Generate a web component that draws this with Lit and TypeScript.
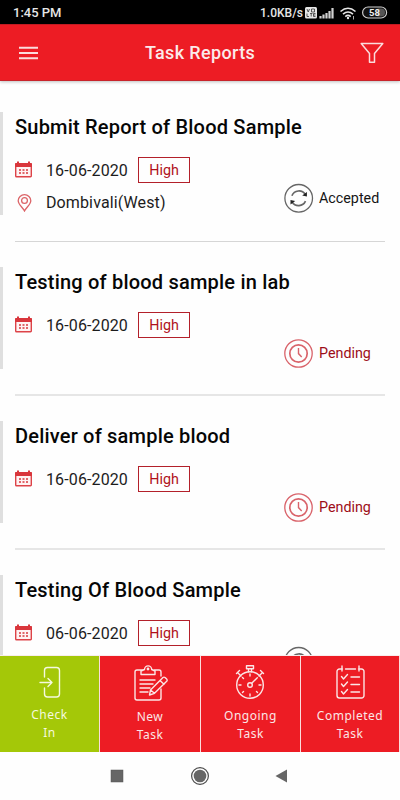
import { LitElement, html, css, svg, nothing } from "lit";
import { customElement, property } from "lit/decorators.js";

type Status = "Accepted" | "Pending";
interface Task { title: string; date: string; place?: string; status: Status; }

const TASKS: Task[] = [
  { title: "Submit Report of Blood Sample", date: "16-06-2020", place: "Dombivali(West)", status: "Accepted" },
  { title: "Testing of blood sample in lab", date: "16-06-2020", status: "Pending" },
  { title: "Deliver of sample blood", date: "16-06-2020", status: "Pending" },
  { title: "Testing Of Blood Sample", date: "06-06-2020", status: "Accepted" },
];

const calendar = html`<svg class="cal" width="17" height="17" viewBox="0 0 17 17">
  <path d="M.7 3.2V15a.8.8 0 0 0 .8.8h14a.8.8 0 0 0 .8-.8V3.2" fill="#fff3f3" stroke="#dd4348" stroke-width="1.4"/>
  <path d="M0 6V2.600Q0 2 .8 2H2V.6h2V2h9V.6h2V2h1.200q.8 0 .8.600V6z" fill="#d9363c"/>
  <path d="M4 9h2M7.500 9h2M11 9h2M4 12h2M7.500 12h2M11 12h2" stroke="#e0666a" stroke-width="1.800"/>
</svg>`;

const pin = html`<svg width="15" height="18" viewBox="0 0 15 18" fill="none" stroke="#dc6468" stroke-width="1.300">
  <path d="M7.500 17C5.500 13 1.200 10.400 1.200 6.700a6.300 6 0 0 1 12.600 0C13.800 10.400 9.500 13 7.500 17z"/>
  <circle cx="7.500" cy="6.500" r="2.900"/>
</svg>`;

const accepted = html`<svg width="30" height="30" viewBox="0 0 30 30" fill="none" stroke="#666">
  <circle cx="14.700" cy="15.300" r="13.800" stroke-width="1.300"/>
  <path d="M7.900 12.700A7.600 7.600 0 0 1 21.300 11.400M21.500 18.200A7.600 7.600 0 0 1 8.100 19" stroke-width="1.700"/>
  <path d="M22.900 9v4.600l-4.700-1zM6.500 21.500v-4.600l4.700 1z" fill="#222" stroke="none"/>
</svg>`;

const pending = html`<svg width="30" height="30" viewBox="0 0 30 30" fill="none" stroke="#d9636a">
  <circle cx="14.500" cy="15.500" r="13.700" stroke-width="1.300"/>
  <circle cx="14.500" cy="15.500" r="8.700" stroke-width="1.700"/>
  <path d="M14.500 10v5.600l3.200 3.400" stroke-width="1.400"/>
</svg>`;

@customElement("task-card")
export class TaskCard extends LitElement {
  @property({ attribute: false }) task!: Task;

  static styles = css`
    :host { display: block; padding-bottom: 25px; }
    .body { display: flex; position: relative; height: 127px; }
    .body.tall { height: 129px; }
    .bar { width: 3px; height: 102px; background: #dfdfdf; flex: none; }
    .tall .bar { height: 103px; }
    .main { margin-left: 12px; flex: 1; }
    h2 { margin: 2px 0 0; font: 500 20px/26px Roboto, sans-serif; letter-spacing: .2px; color: #060606; white-space: nowrap; }
    .row { display: flex; align-items: center; height: 26px; margin-top: 17px; }
    .row svg { flex: none; }
    .cal { margin: 0 0 2px 0; }
    .date { width: 92px; margin-left: 14px; font-size: 16px; letter-spacing: .12px; color: #1c1c1c; }
    .tag { box-sizing: border-box; width: 52px; height: 26px; border: 1px solid #b3202a; color: #b0101a;
      display: flex; align-items: center; justify-content: center; font-size: 14.300px; }
    .place { margin-top: 6px; font-size: 16px; letter-spacing: .12px; color: #1c1c1c; }
    .place svg { margin: 2px 0 0 2px; }
    .place span { margin-left: 14px; }
    .status { position: absolute; left: 284px; top: 71px; height: 30px; display: flex; align-items: center;
      gap: 5px; font-size: 14.300px; color: #9d0d18; }
    .ok { color: #151515; }
    .ok span { padding-top: 1px; }
    .tall .ok span { padding-top: 0; }
    hr { border: 0; margin: 0 15px; height: 2px; background: #e6e6e6; }
    .tall + hr { height: 1px; background: #d6d6d6; }
  `;

  render() {
    const t = this.task;
    const ok = t.status === "Accepted";
    return html`
      <div class="body ${t.place ? "tall" : ""}">
        <div class="bar"></div>
        <div class="main">
          <h2>${t.title}</h2>
          <div class="row">${calendar}<span class="date">${t.date}</span><span class="tag">High</span></div>
          ${t.place ? html`<div class="row place">${pin}<span>${t.place}</span></div>` : nothing}
        </div>
        <div class="status ${ok ? "ok" : ""}">${ok ? accepted : pending}<span>${t.status}</span></div>
      </div>
      <hr />`;
  }
}

const checkIn = svg`<path d="M12.500 12V5.500a3 3 0 0 1 3-3h9a3 3 0 0 1 3 3v23.500a3 3 0 0 1-3 3h-9a3 3 0 0 1-3-3V23M8 17.500h12M16 13.500l4 4-4 4"/>`;
const newTask = svg`<path d="M10 5H4a2 2 0 0 0-2 2v26a2 2 0 0 0 2 2h22a2 2 0 0 0 2-2V24M28 11V7a2 2 0 0 0-2-2h-5M8 9.500V6l3.500-1.500a3.500 3.500 0 0 1 7.200 0L22 6v3.500zM7 15h15M7 19h13M7 23h10M7 27h8"/>
  <path d="M17.500 25 30 12.500q1-.8 2 0l1.700 1.600q.9 1.100 0 2.200L21.500 28.300l-5 1.700zM17.500 25l4 3.300M27 15.500l4 3.800"/><circle cx="15" cy="4" r=".7"/>`;
const stopwatch = svg`<circle cx="16.500" cy="20" r="13.300"/><path d="M13 .8h7v3h-7zM15 4v2.700M18 4v2.700M4.500 8l3 3M28.500 8l-3 3M3 8.500l3-3M30 8.500l-3-3M18.200 18.300l5.600-5.600M16.500 9v2M16.500 29v2M5.500 20h2M25.500 20h2M9 27.500l1-1M24 27.500l-1-1M9 12.500l1 1"/><circle cx="16.500" cy="20" r="2.300"/>`;
const checklist = svg`<path d="M7 4H4a2.500 2.500 0 0 0-2.500 2.500v24A2.500 2.500 0 0 0 4 33h22a2.500 2.500 0 0 0 2.500-2.500v-24A2.500 2.500 0 0 0 26 4h-3M10 4h10M6.500 1v5M23.500 1v5M6 11.500l2 2.500 4-4.500M6 19l2 2.500 4-4.500M6 26.500 8 29l4-4.500M15.500 12H24M15.500 19.500H24M15.500 27H24"/>`;

@customElement("app-root")
export class AppRoot extends LitElement {
  static styles = css`
    :host { display: flex; flex-direction: column; width: 400px; height: 800px; overflow: hidden;
      background: #fefefe; font-family: Roboto, sans-serif; }
    .system { height: 24px; flex: none; background: #000; color: #e6e6e6; display: flex; align-items: center;
      padding: 0 12px 0 13px; font-weight: 500; font-size: 12px; line-height: 24px; }
    .clock { padding-top: 2px; font-size: 13px; }
    .right { margin-left: auto; display: flex; align-items: center; padding-top: 1px; }
    .right svg { flex: none; }
    header { height: 57px; flex: none; box-sizing: border-box; background: #ed1c24; display: flex; align-items: center;
      justify-content: space-between; padding: 0 16px 0 19px; border-top: 1px solid #c11b22; border-bottom: 1px solid #c9242b;
      box-shadow: 0 1px 3px rgba(0,0,0,.25); z-index: 1; }
    h1 { margin: 0 0 0 2px; font: 500 18px/24px Roboto, sans-serif; letter-spacing: .35px; color: #fbeaea; }
    main { flex: 1; min-height: 0; overflow: hidden; padding-top: 31px; }
    .tiles { height: 97px; box-sizing: border-box; flex: none; display: grid; grid-template-columns: 99px 100px 99px 1fr;
      background: #fbdcdc; column-gap: 1px; padding-right: 1px; border-top: 1px solid #f8eded; }
    .tile { background: #ed1c24; display: flex; flex-direction: column; align-items: center; color: #fbe6e6;
      font: 12px/18px "Noto Sans", sans-serif; letter-spacing: .5px; text-align: center; }
    .tile.green { background: #a4c808; color: #f5f9df; }
    .tile svg { height: 38px; width: 35px; margin: 9px 0 4px; fill: none; stroke: currentColor; stroke-width: 1.400;
      stroke-linecap: round; stroke-linejoin: round; flex: none; }
    .tile.green svg { height: 36px; margin-bottom: 5px; }
    .tile.lower svg { margin-bottom: 5px; }
    .tile span { width: 80px; }
    nav { height: 48px; flex: none; }
    nav svg { display: block; }
  `;

  render() {
    return html`
      <div class="system">
        <span class="clock">1:45 PM</span>
        <div class="right">
          <span>1.0KB/s</span>
          <svg width="85" height="16" viewBox="0 0 85 16">
            <rect x="2" y="2" width="12" height="11.500" rx="1.500" fill="#e6e6e6"/>
            <path d="M4 4l1.200 3L6.500 4M8.500 4h3v3h-3zM4 8.500v3h2M7 8.500h2.500M8.200 8.500v3M12.500 8.500h-2v3h2M10.500 10h2" stroke="#333" fill="none" stroke-width=".8"/>
            <path d="M17.500 13.500v-2.500M20.500 13.500v-4M23.500 13.500V8M26.500 13.500V6M29.500 13.500V3" stroke="#d2d2d2" stroke-width="2.200"/>
            <g fill="none" stroke="#e6e6e6" stroke-width="1.600"><path d="M37.500 6.500q7.500-6.500 15 0M40 9.200q5-4.400 10 0M42.300 11.600q2.700-2.300 5.400 0"/></g>
            <circle cx="45" cy="13" r="1.200" fill="#e6e6e6"/><path d="M50.500 11v3.500" stroke="#aaa"/>
            <rect x="59.600" y="2" width="24" height="11" rx="5.500" fill="#111" stroke="#cfcfcf" stroke-width="1.200"/>
            <path d="M74.500 3.500h3.500a4 4 0 0 1 0 8h-3.500z" fill="#555"/>
            <text x="71.500" y="11" text-anchor="middle" font-size="9.500" font-weight="700" fill="#eee">58</text>
          </svg>
        </div>
      </div>
      <header>
        <svg width="19" height="14" viewBox="0 0 19 14"><path d="M0 1.800h19M0 7h19M0 12.200h19" stroke="#fbdcdc" stroke-width="1.900"/></svg>
        <h1>Task Reports</h1>
        <svg width="24" height="22" viewBox="0 0 24 22"><path d="M1.200 1.500h21.600L14.500 11.500v8.800h-5v-8.800z" fill="none" stroke="#fbdcdc" stroke-width="1.500" stroke-linejoin="round"/></svg>
      </header>
      <main>${TASKS.map((t) => html`<task-card .task=${t}></task-card>`)}</main>
      <div class="tiles">
        <div class="tile green"><svg viewBox="0 0 35 36">${checkIn}</svg><span>Check<br />In</span></div>
        <div class="tile lower"><svg viewBox="0 0 35 38">${newTask}</svg><span>New<br />Task</span></div>
        <div class="tile"><svg viewBox="0 0 34 38">${stopwatch}</svg><span>Ongoing<br />Task</span></div>
        <div class="tile"><svg viewBox="0 0 30 38">${checklist}</svg><span>Completed<br />Task</span></div>
      </div>
      <nav>
        <svg width="400" height="48" viewBox="0 0 400 48" fill="#666">
          <rect x="111" y="18" width="12" height="12" stroke="#555" stroke-width=".5"/>
          <circle cx="200" cy="24" r="6.300"/><circle cx="200" cy="24" r="8.400" fill="none" stroke="#4c4c4c" stroke-width="1.200"/>
          <path d="M275.500 24 287 17.500v13z"/>
        </svg>
      </nav>`;
  }
}
